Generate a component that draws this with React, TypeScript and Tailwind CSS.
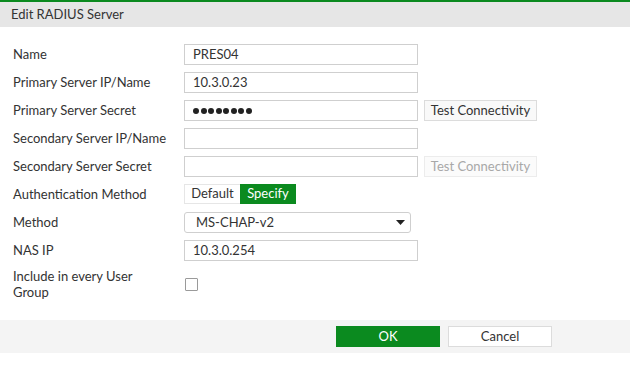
import React from "react";

const font = { fontFamily: "Lato, 'Open Sans', sans-serif" };

function Row({ label, children }: { label: string; children?: React.ReactNode }) {
  return (
    <div className="flex h-[28px] items-start">
      <div className="flex h-[21px] w-[171px] shrink-0 items-center text-[13px] text-[#333]">
        {label}
      </div>
      <div className="flex items-start gap-[6px]">{children}</div>
    </div>
  );
}

function TextBox({ value, children }: { value?: string; children?: React.ReactNode }) {
  return (
    <div className="flex h-[21px] w-[234px] items-center border border-[#cfcfcf] bg-white px-[8px] text-[13px] text-[#333]">
      {value}
      {children}
    </div>
  );
}

function TestButton({ disabled }: { disabled?: boolean }) {
  return (
    <button
      type="button"
      className={`flex h-[21px] w-[113px] items-center justify-center border text-[13px] ${
        disabled
          ? "border-[#ececec] bg-[#fbfbfb] text-[#a8a8a8]"
          : "border-[#dcdcdc] bg-[#f9f9f9] text-[#333]"
      }`}
    >
      Test Connectivity
    </button>
  );
}

export default function App() {
  return (
    <div style={font} className="h-[382px] w-[630px] overflow-hidden bg-white">
      <div className="h-[2px] bg-[#0b8a1f]" />
      <div className="flex h-[25px] items-center bg-[#e6e6e6] pl-[11px] text-[13px] text-[#333]">
        Edit RADIUS Server
      </div>

      <div className="pl-[13px] pt-[17px]">
        <Row label="Name">
          <TextBox value="PRES04" />
        </Row>
        <Row label="Primary Server IP/Name">
          <TextBox value="10.3.0.23" />
        </Row>
        <Row label="Primary Server Secret">
          <TextBox>
            <div className="flex gap-[1.5px]">
              {Array.from({ length: 8 }).map((_, i) => (
                <span key={i} className="h-[6px] w-[6px] rounded-full bg-[#222]" />
              ))}
            </div>
          </TextBox>
          <TestButton />
        </Row>
        <Row label="Secondary Server IP/Name">
          <TextBox />
        </Row>
        <Row label="Secondary Server Secret">
          <TextBox />
          <TestButton disabled />
        </Row>
        <Row label="Authentication Method">
          <div className="flex h-[20px] text-[13px]">
            <div className="flex w-[56px] items-center justify-center border border-r-0 border-[#e6e6e6] bg-white text-[#333]">
              Default
            </div>
            <div className="flex w-[56px] items-center justify-center bg-[#0b8a1f] text-white">
              Specify
            </div>
          </div>
        </Row>
        <Row label="Method">
          <div className="flex h-[21px] w-[227px] items-center justify-between rounded-[3px] border border-[#cfcfcf] bg-white pl-[11px] pr-[5px] text-[13px] text-[#333]">
            MS-CHAP-v2
            <svg width="9" height="5" viewBox="0 0 9 5">
              <path d="M0 0 L9 0 L4.5 5 Z" fill="#222" />
            </svg>
          </div>
        </Row>
        <Row label="NAS IP">
          <TextBox value="10.3.0.254" />
        </Row>
        <div className="flex items-center">
          <div className="w-[171px] shrink-0 text-[13px] leading-[16px] text-[#333]">
            Include in every User
            <br />
            Group
          </div>
          <div className="ml-[1px] h-[13px] w-[13px] rounded-[1px] border border-[#9a9a9a] bg-white" />
        </div>
      </div>

      <div className="mt-[20px] flex h-[33px] items-center gap-[8px] bg-[#f4f4f4] pl-[336px]">
        <button
          type="button"
          className="flex h-[21px] w-[104px] items-center justify-center bg-[#0b8a1f] text-[13px] text-white"
        >
          OK
        </button>
        <button
          type="button"
          className="flex h-[21px] w-[104px] items-center justify-center border border-[#dcdcdc] bg-white text-[13px] text-[#333]"
        >
          Cancel
        </button>
      </div>
    </div>
  );
}
